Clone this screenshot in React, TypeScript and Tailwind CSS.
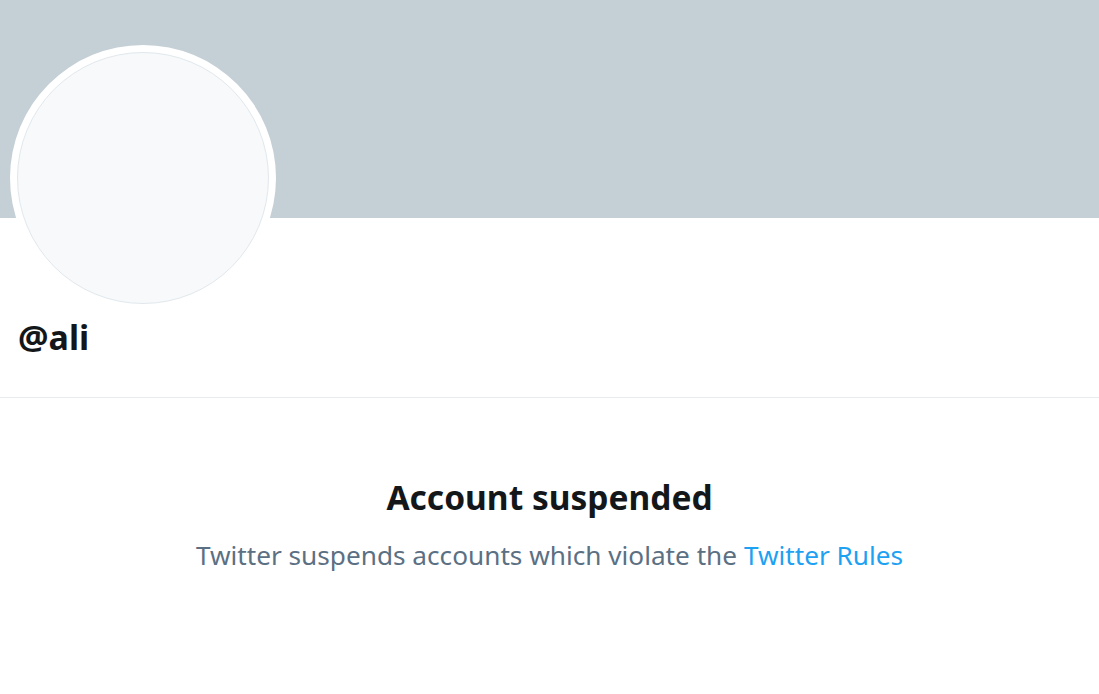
export default function App() {
  return (
    <div className="min-h-screen bg-white" style={{ fontFamily: '"Noto Sans", "Open Sans", sans-serif' }}>
      <div className="h-[218px] bg-[#c4cfd6]" />
      <div className="px-[10px]">
        <div className="-mt-[173px] h-[266px] w-[266px] rounded-full bg-white p-[7px]">
          <div className="h-full w-full rounded-full border border-[#e1e8ed] bg-[#f7f9fa]" />
        </div>
        <h2 className="mt-[2px] pl-[8px] text-[34px] font-bold leading-[48px] text-[#14171a]">@ali</h2>
      </div>
      <div className="mt-[36px] border-b border-[#e6ecf0]" />
      <div className="flex flex-col items-center pt-[77px]">
        <h1 className="text-[33.5px] font-bold leading-[44px] text-[#14171a]">Account suspended</h1>
        <p className="mt-[19px] text-[26.2px] leading-[34px] text-[#5b7083]">
          Twitter suspends accounts which violate the{" "}
          <a href="#" className="text-[#1da1f2]">
            Twitter Rules
          </a>
        </p>
      </div>
    </div>
  );
}
